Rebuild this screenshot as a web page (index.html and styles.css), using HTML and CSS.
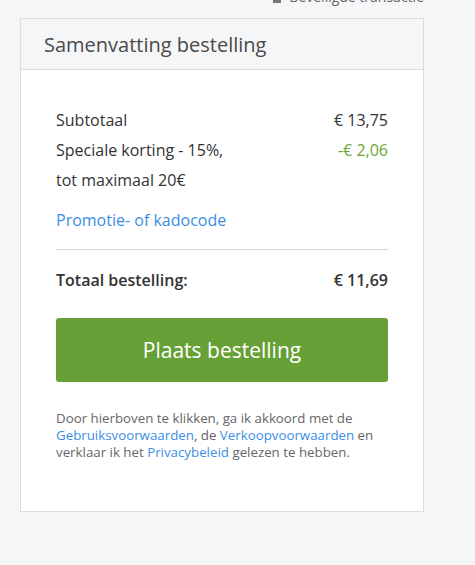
FILE: index.html
```html
<!DOCTYPE html>
<html lang="nl">
<head>
<meta charset="utf-8">
<title>Samenvatting bestelling</title>
<link rel="stylesheet" href="styles.css">
</head>
<body>
<div class="topbar">
  <div class="secure">
    <svg class="lock" viewBox="0 0 12 12" width="12" height="12"><path d="M3 5V3.5a3 3 0 0 1 6 0V5h1v7H2V5zm1.5 0h3V3.5a1.5 1.5 0 0 0-3 0z" fill="#777"/></svg>
    <span>Beveiligde transactie</span>
  </div>
</div>
<div class="card">
  <div class="card-header">
    <h2 class="title">Samenvatting bestelling</h2>
  </div>
  <div class="card-body">
    <div class="row">
      <span>Subtotaal</span>
      <span>€ 13,75</span>
    </div>
    <div class="row">
      <span>Speciale korting - 15%,<br>tot maximaal 20€</span>
      <span class="discount">-€ 2,06</span>
    </div>
    <a class="promo" href="#">Promotie- of kadocode</a>
    <hr class="divider">
    <div class="row total">
      <span>Totaal bestelling:</span>
      <span>€ 11,69</span>
    </div>
    <button class="order-btn" type="button">Plaats bestelling</button>
    <p class="legal">Door hierboven te klikken, ga ik akkoord met de <a href="#">Gebruiksvoorwaarden</a>, de <a href="#">Verkoopvoorwaarden</a> en verklaar ik het <a href="#">Privacybeleid</a> gelezen te hebben.</p>
  </div>
</div>
</body>
</html>
```
FILE: styles.css
```css
* { box-sizing: border-box; }
html, body {
  margin: 0;
  padding: 0;
  background: #f5f6f8;
  font-family: "Open Sans", "Liberation Sans", sans-serif;
  color: #333;
}
.topbar {
  height: 18px;
  display: flex;
  justify-content: flex-end;
  align-items: flex-end;
  padding-right: 51px;
}
.secure {
  display: flex;
  align-items: center;
  gap: 6px;
  font-size: 14px;
  line-height: 18px;
  color: #666;
  margin-bottom: 12px;
  white-space: nowrap;
}
.card {
  margin-left: 20px;
  width: 404px;
  border: 1px solid #dcdde0;
  background: #fff;
}
.card-header {
  height: 51px;
  background: #f5f6f8;
  border-bottom: 1px solid #dcdde0;
  padding-left: 23px;
  display: flex;
  align-items: center;
}
.title {
  margin: 0;
  font-size: 20px;
  font-weight: 400;
  color: #4a4a4a;
}
.card-body {
  padding: 35px 35px 50px;
  display: flex;
  flex-direction: column;
}
.row {
  display: flex;
  justify-content: space-between;
  align-items: flex-start;
  font-size: 16px;
  line-height: 30px;
}
.discount { color: #6aa63a; }
.promo {
  margin-top: 10px;
  font-size: 16px;
  line-height: 30px;
  color: #3a8ee6;
  text-decoration: none;
}
.divider {
  margin: 14px 0 0;
  border: 0;
  border-top: 1px solid #d6d6d6;
}
.total {
  margin-top: 15px;
  font-weight: 600;
}
.order-btn {
  margin-top: 23px;
  height: 64px;
  border: 0;
  border-radius: 3px;
  background: #67a036;
  color: #fff;
  font-family: inherit;
  font-size: 21px;
  cursor: pointer;
}
.legal {
  margin: 28px 0 0;
  font-size: 13.3px;
  line-height: 17px;
  color: #666;
}
.legal a {
  color: #3a8ee6;
  font-weight: 500;
  text-decoration: none;
}
```
